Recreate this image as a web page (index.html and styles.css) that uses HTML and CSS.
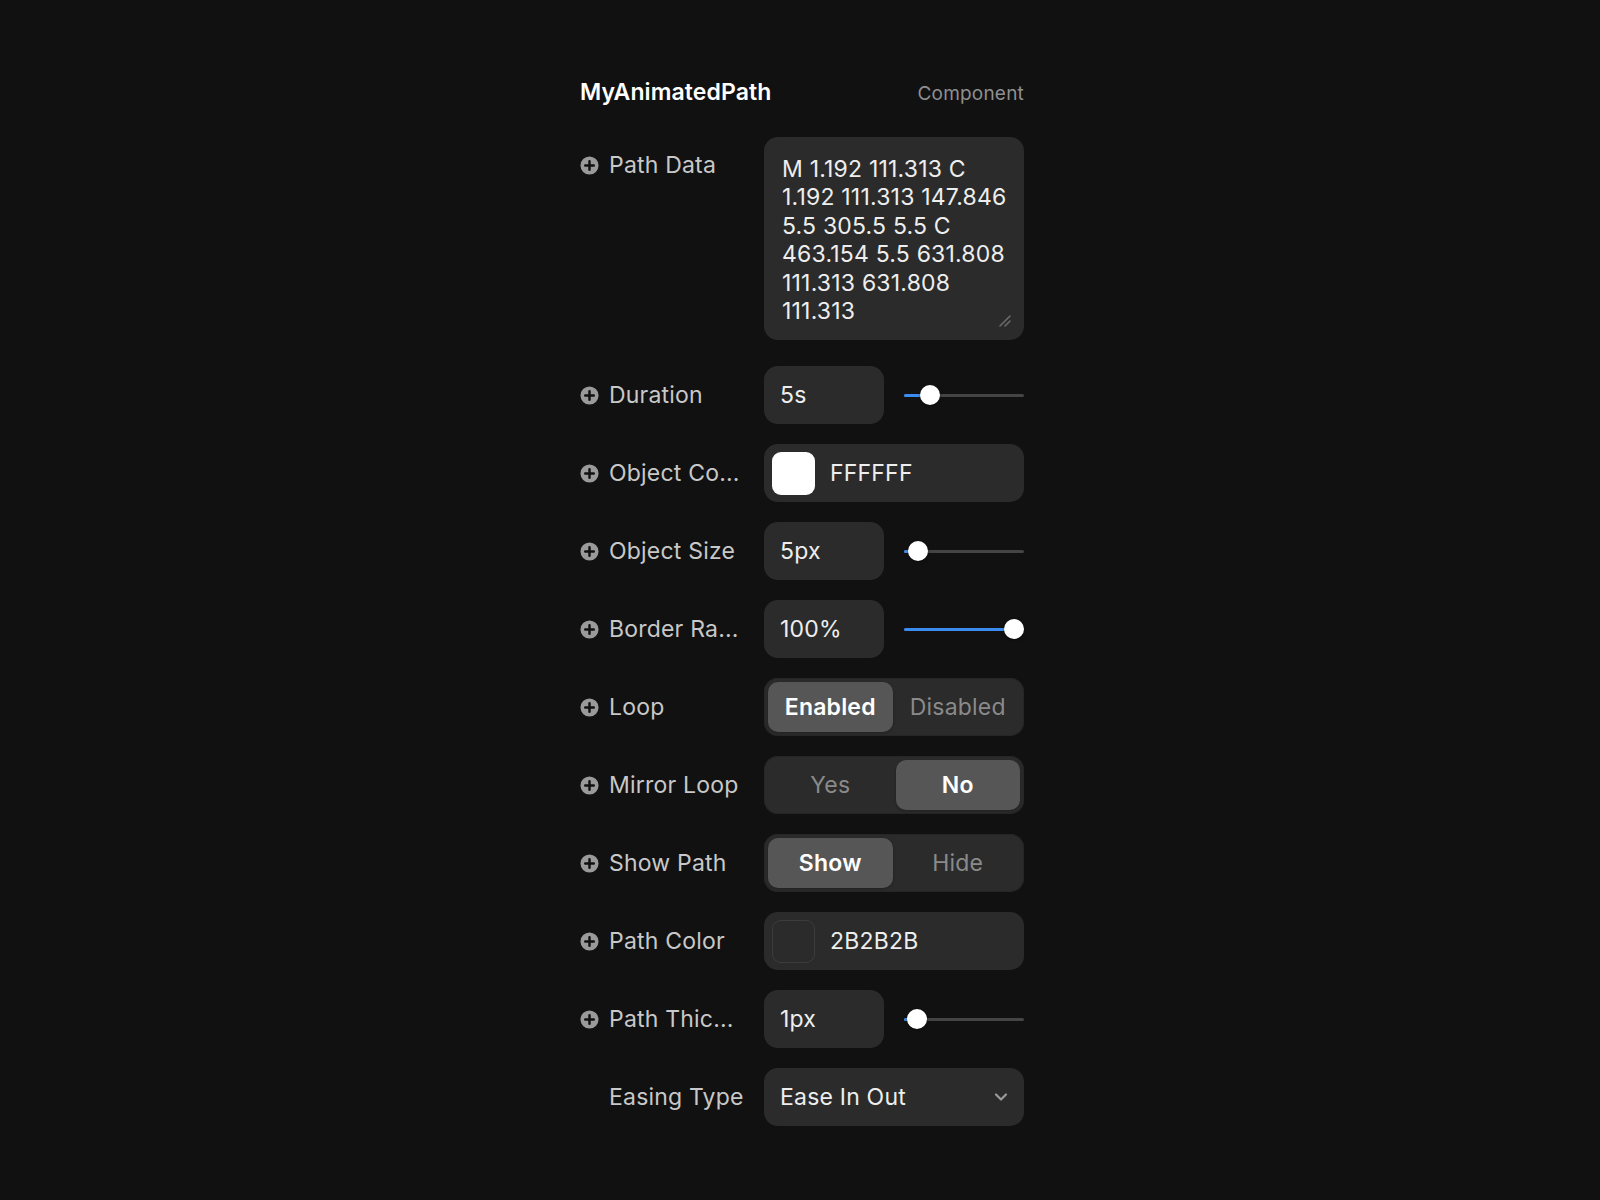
FILE: index.html
```html
<!DOCTYPE html>
<html>
<head>
<meta charset="utf-8">
<link rel="stylesheet" href="styles.css">
</head>
<body>
<div class="panel">
  <div class="header">
    <div class="title">MyAnimatedPath</div>
    <div class="kind">Component</div>
  </div>

  <div class="row row-top">
    <div class="label"><span class="plus"><svg viewBox="0 0 20 20"><circle cx="10" cy="10" r="9.5" fill="#9a9a9a"/><path d="M10 5.5v9M5.5 10h9" stroke="#111" stroke-width="2.6" stroke-linecap="round"/></svg></span>Path Data</div>
    <div class="textarea">
      M 1.192 111.313 C<br>1.192 111.313 147.846<br>5.5 305.5 5.5 C<br>463.154 5.5 631.808<br>111.313 631.808<br>111.313
      <svg class="grip" viewBox="0 0 14 14"><path d="M2 12L12 2M7 12L12 7" stroke="#6a6a6a" stroke-width="1.6" stroke-linecap="round"/></svg>
    </div>
  </div>

  <div class="row">
    <div class="label"><span class="plus"><svg viewBox="0 0 20 20"><circle cx="10" cy="10" r="9.5" fill="#9a9a9a"/><path d="M10 5.5v9M5.5 10h9" stroke="#111" stroke-width="2.6" stroke-linecap="round"/></svg></span>Duration</div>
    <div class="ctrl-split">
      <div class="input">5s</div>
      <div class="slider"><div class="track"><div class="fill" style="width:26px"></div></div><div class="thumb" style="left:16px"></div></div>
    </div>
  </div>

  <div class="row">
    <div class="label"><span class="plus"><svg viewBox="0 0 20 20"><circle cx="10" cy="10" r="9.5" fill="#9a9a9a"/><path d="M10 5.5v9M5.5 10h9" stroke="#111" stroke-width="2.6" stroke-linecap="round"/></svg></span>Object Co...</div>
    <div class="color">
      <span class="swatch swatch-white"></span>
      <span class="hex">FFFFFF</span>
    </div>
  </div>

  <div class="row">
    <div class="label"><span class="plus"><svg viewBox="0 0 20 20"><circle cx="10" cy="10" r="9.5" fill="#9a9a9a"/><path d="M10 5.5v9M5.5 10h9" stroke="#111" stroke-width="2.6" stroke-linecap="round"/></svg></span>Object Size</div>
    <div class="ctrl-split">
      <div class="input">5px</div>
      <div class="slider"><div class="track"><div class="fill" style="width:10px"></div></div><div class="thumb" style="left:4px"></div></div>
    </div>
  </div>

  <div class="row">
    <div class="label"><span class="plus"><svg viewBox="0 0 20 20"><circle cx="10" cy="10" r="9.5" fill="#9a9a9a"/><path d="M10 5.5v9M5.5 10h9" stroke="#111" stroke-width="2.6" stroke-linecap="round"/></svg></span>Border Ra...</div>
    <div class="ctrl-split">
      <div class="input">100%</div>
      <div class="slider"><div class="track"><div class="fill" style="width:110px"></div></div><div class="thumb" style="left:100px"></div></div>
    </div>
  </div>

  <div class="row">
    <div class="label"><span class="plus"><svg viewBox="0 0 20 20"><circle cx="10" cy="10" r="9.5" fill="#9a9a9a"/><path d="M10 5.5v9M5.5 10h9" stroke="#111" stroke-width="2.6" stroke-linecap="round"/></svg></span>Loop</div>
    <div class="segment">
      <div class="seg seg-on">Enabled</div>
      <div class="seg">Disabled</div>
    </div>
  </div>

  <div class="row">
    <div class="label"><span class="plus"><svg viewBox="0 0 20 20"><circle cx="10" cy="10" r="9.5" fill="#9a9a9a"/><path d="M10 5.5v9M5.5 10h9" stroke="#111" stroke-width="2.6" stroke-linecap="round"/></svg></span>Mirror Loop</div>
    <div class="segment">
      <div class="seg">Yes</div>
      <div class="seg seg-on">No</div>
    </div>
  </div>

  <div class="row">
    <div class="label"><span class="plus"><svg viewBox="0 0 20 20"><circle cx="10" cy="10" r="9.5" fill="#9a9a9a"/><path d="M10 5.5v9M5.5 10h9" stroke="#111" stroke-width="2.6" stroke-linecap="round"/></svg></span>Show Path</div>
    <div class="segment">
      <div class="seg seg-on">Show</div>
      <div class="seg">Hide</div>
    </div>
  </div>

  <div class="row">
    <div class="label"><span class="plus"><svg viewBox="0 0 20 20"><circle cx="10" cy="10" r="9.5" fill="#9a9a9a"/><path d="M10 5.5v9M5.5 10h9" stroke="#111" stroke-width="2.6" stroke-linecap="round"/></svg></span>Path Color</div>
    <div class="color">
      <span class="swatch swatch-dark"></span>
      <span class="hex">2B2B2B</span>
    </div>
  </div>

  <div class="row">
    <div class="label"><span class="plus"><svg viewBox="0 0 20 20"><circle cx="10" cy="10" r="9.5" fill="#9a9a9a"/><path d="M10 5.5v9M5.5 10h9" stroke="#111" stroke-width="2.6" stroke-linecap="round"/></svg></span>Path Thic...</div>
    <div class="ctrl-split">
      <div class="input">1px</div>
      <div class="slider"><div class="track"><div class="fill" style="width:10px"></div></div><div class="thumb" style="left:3px"></div></div>
    </div>
  </div>

  <div class="row">
    <div class="label label-noicon">Easing Type</div>
    <div class="select">
      <span>Ease In Out</span>
      <svg class="chev" viewBox="0 0 14 10"><path d="M2 2.5L7 7.5L12 2.5" stroke="#9a9a9a" stroke-width="2.2" fill="none" stroke-linecap="round" stroke-linejoin="round"/></svg>
    </div>
  </div>
</div>
</body>
</html>
```

FILE: styles.css
```css
html, body {
  margin: 0;
  padding: 0;
  background: #111111;
}
body {
  font-family: Inter, "Noto Sans", sans-serif;
  color: #eeeeee;
  width: 1600px;
  height: 1200px;
  letter-spacing: 0.2px;
}
.panel {
  width: 444px;
  margin-left: 580px;
  padding-top: 78px;
  display: flex;
  flex-direction: column;
  gap: 20px;
}
.header {
  display: flex;
  justify-content: space-between;
  align-items: baseline;
  height: 38px;
  margin-bottom: 1px;
}
.title {
  font-size: 23px;
  font-weight: 600;
  color: #ffffff;
  letter-spacing: 0.1px;
}
.kind {
  font-size: 19px;
  color: #8f8f8f;
}
.row {
  display: flex;
  align-items: center;
  min-height: 58px;
}
.row-top {
  align-items: flex-start;
  margin-bottom: 6px;
}
.row-top .label {
  padding-top: 14px;
}
.label {
  flex: none;
  width: 184px;
  box-sizing: border-box;
  display: flex;
  align-items: center;
  gap: 10px;
  font-size: 23px;
  color: #c8c8c8;
  white-space: nowrap;
}
.label-noicon {
  padding-left: 29px;
}
.plus {
  flex: none;
  width: 19px;
  height: 19px;
  display: flex;
}
.plus svg {
  width: 19px;
  height: 19px;
}
.textarea {
  position: relative;
  flex: none;
  width: 260px;
  height: 203px;
  box-sizing: border-box;
  padding: 18px 18px 16px;
  background: #2b2b2b;
  border-radius: 14px;
  font-size: 23px;
  line-height: 28.4px;
  color: #eeeeee;
  white-space: nowrap;
}
.grip {
  position: absolute;
  right: 12px;
  bottom: 12px;
  width: 14px;
  height: 14px;
}
.ctrl-split {
  flex: none;
  width: 260px;
  display: flex;
  align-items: center;
  gap: 20px;
}
.input {
  width: 120px;
  height: 58px;
  box-sizing: border-box;
  padding-left: 16px;
  display: flex;
  align-items: center;
  background: #2b2b2b;
  border-radius: 14px;
  font-size: 23px;
  color: #eeeeee;
}
.slider {
  position: relative;
  width: 120px;
  height: 20px;
  display: flex;
  align-items: center;
}
.track {
  width: 100%;
  height: 3px;
  background: #444444;
  border-radius: 2px;
  overflow: hidden;
}
.fill {
  height: 100%;
  background: #3b8cf0;
}
.thumb {
  position: absolute;
  top: 0;
  width: 20px;
  height: 20px;
  border-radius: 50%;
  background: #ffffff;
  box-shadow: 0 1px 3px rgba(0,0,0,0.4);
}
.color {
  flex: none;
  width: 260px;
  height: 58px;
  box-sizing: border-box;
  padding-left: 8px;
  display: flex;
  align-items: center;
  gap: 15px;
  background: #2b2b2b;
  border-radius: 14px;
}
.swatch {
  width: 43px;
  height: 43px;
  box-sizing: border-box;
  border-radius: 9px;
}
.swatch-white {
  background: #ffffff;
}
.swatch-dark {
  background: #2b2b2b;
  border: 1px solid #3c3c3c;
}
.hex {
  font-size: 23px;
  color: #eeeeee;
}
.segment {
  flex: none;
  width: 260px;
  height: 58px;
  box-sizing: border-box;
  padding: 4px;
  gap: 3px;
  display: flex;
  background: #2b2b2b;
  border-radius: 14px;
  box-shadow: inset 0 0 0 1px #262626;
}
.seg {
  flex: 1;
  display: flex;
  align-items: center;
  justify-content: center;
  border-radius: 10px;
  font-size: 23px;
  color: #8a8a8a;
}
.seg-on {
  background: #565656;
  color: #ffffff;
  font-weight: 600;
  box-shadow: 0 1px 3px rgba(0,0,0,0.25);
}
.select {
  flex: none;
  width: 260px;
  height: 58px;
  box-sizing: border-box;
  padding: 0 16px 0 16px;
  display: flex;
  align-items: center;
  justify-content: space-between;
  background: #2b2b2b;
  border-radius: 14px;
  font-size: 23px;
  color: #eeeeee;
}
.chev {
  width: 14px;
  height: 10px;
}
```
